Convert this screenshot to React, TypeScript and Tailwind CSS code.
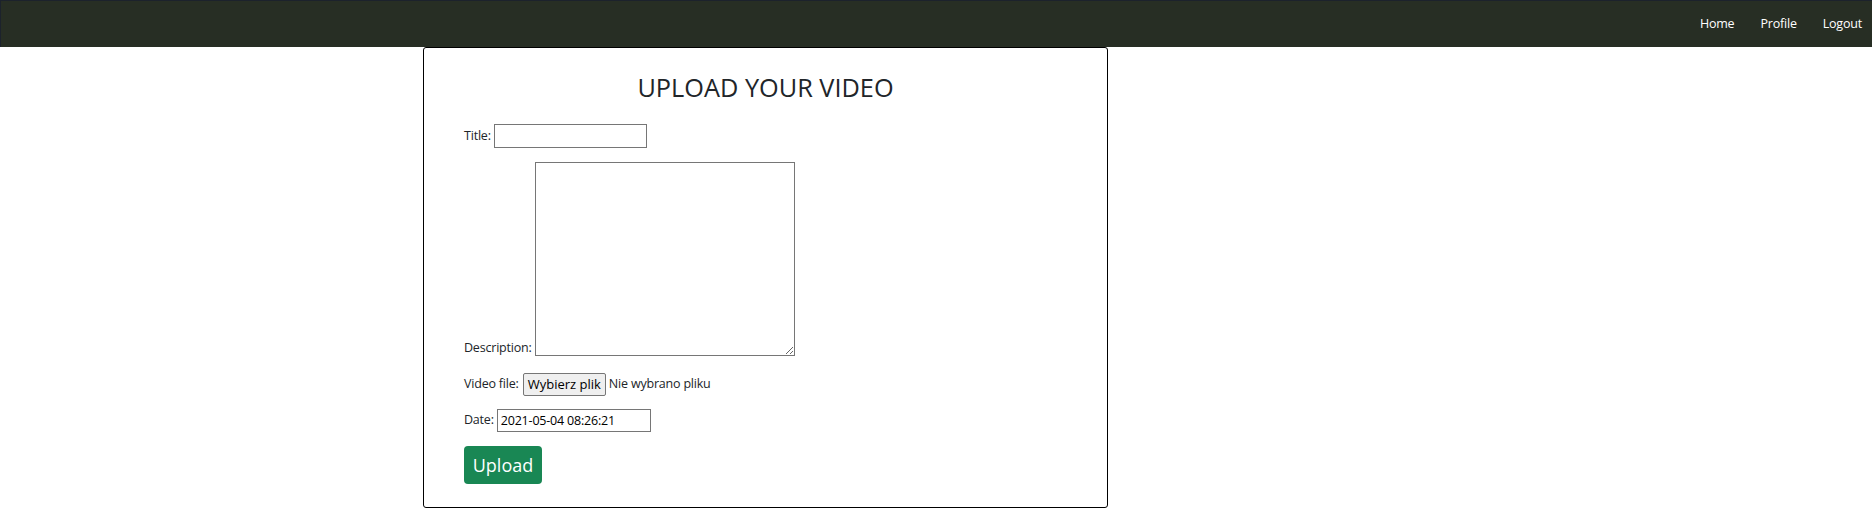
import React from 'react';

const NavLink: React.FC<{ label: string }> = ({ label }) => (
    <a href="#" className="text-white text-[12.5px] tracking-[-0.2px] leading-none">{label}</a>
);

const App: React.FC = () => {
    return (
        <div className="min-h-screen bg-white text-[#212529] font-['Open_Sans','Noto_Sans',sans-serif]">
            <nav className="h-[47px] bg-[#272e24] border-t border-l border-[#1c222c] flex items-center justify-end gap-[26px] pr-[10px]">
                <NavLink label="Home" />
                <NavLink label="Profile" />
                <NavLink label="Logout" />
            </nav>
            <div className="ml-[423px] w-[685px] h-[461px] border border-black rounded-[3px] pl-[40px]">
                <h1 className="text-center text-[25.3px] leading-[29px] mt-[25px] pr-[40px]">UPLOAD YOUR VIDEO</h1>

                <form className="mt-[22px] text-[12.5px] tracking-[-0.2px]">
                    <div className="flex items-center gap-[3px]">
                        <label>Title:</label>
                        <input type="text" className="w-[153px] h-[24px] border border-[#767676] px-1 outline-none" />
                    </div>

                    <div className="flex items-end gap-[3px] mt-[14px]">
                        <label className="mb-[-2px]">Description:</label>
                        <textarea className="w-[260px] h-[194px] border border-[#767676] outline-none resize" />
                    </div>

                    <div className="flex items-center mt-[17px]">
                        <span>Video file:</span>
                        <button type="button" className="ml-[4px] h-[23px] px-[4px] bg-[#efefef] border border-[#767676] rounded-[2px] text-black text-[13px] tracking-normal">Wybierz plik</button>
                        <span className="ml-[3px]">Nie wybrano pliku</span>
                    </div>

                    <div className="flex items-center gap-[3px] mt-[13px]">
                        <label>Date:</label>
                        <input type="text" defaultValue="2021-05-04 08:26:21" className="w-[154px] h-[23px] border border-[#767676] px-[3px] text-black outline-none" />
                    </div>

                    <button type="submit" className="mt-[14px] w-[78px] h-[38px] bg-[#198754] text-white text-[18px] tracking-normal rounded-[4px]">Upload</button>
                </form>
            </div>
        </div>
    );
};

export default App;
